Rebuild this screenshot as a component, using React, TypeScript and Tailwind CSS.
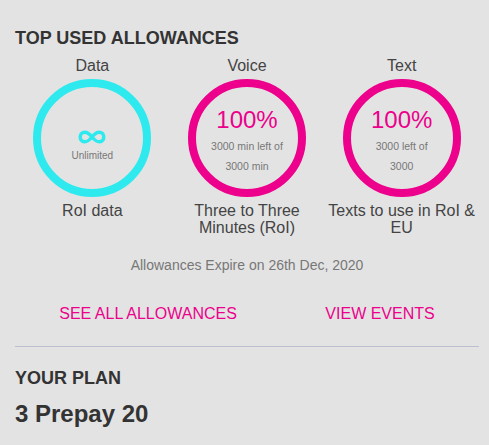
import React from "react";

type Allowance = {
  label: string;
  color: "cyan" | "pink";
  caption: string;
  main?: string;
  lines?: string[];
};

const items: Allowance[] = [
  { label: "Data", color: "cyan", caption: "RoI data" },
  { label: "Voice", color: "pink", main: "100%", lines: ["3000 min left of", "3000 min"], caption: "Three to Three Minutes (RoI)" },
  { label: "Text", color: "pink", main: "100%", lines: ["3000 left of", "3000"], caption: "Texts to use in RoI & EU" },
];

function InfinityIcon() {
  return (
    <svg width="28" height="14" viewBox="0 0 28 14" fill="none" stroke="#2eeaee" strokeWidth="3.5">
      <path d="M14 7c-2.5-3-4.5-4.8-7.2-4.8C4.3 2.2 2.2 4.3 2.2 7s2.1 4.8 4.6 4.8c2.7 0 4.7-1.8 7.2-4.8s4.5-4.8 7.2-4.8c2.5 0 4.6 2.1 4.6 4.8s-2.1 4.8-4.6 4.8c-2.7 0-4.7-1.8-7.2-4.8z" />
    </svg>
  );
}

function Dial({ item }: { item: Allowance }) {
  const ring = item.color === "cyan" ? "border-[#2eeaee]" : "border-[#ec008c]";
  return (
    <div className="flex flex-col items-center">
      <div className="text-[16px] leading-[20px] text-[#444]">{item.label}</div>
      <div className={`mt-[3px] flex h-[118px] w-[118px] flex-col items-center rounded-full border-[8px] ${ring}`}>
        {item.main ? (
          <>
            <div className="mt-[19px] text-[24px] leading-[28px] text-[#ec008c]">{item.main}</div>
            <div className="mt-[2px] text-center text-[10.5px] leading-[20px] text-[#777]">
              {item.lines?.map((l) => (
                <div key={l}>{l}</div>
              ))}
            </div>
          </>
        ) : (
          <>
            <div className="mt-[43px] h-[14px]"><InfinityIcon /></div>
            <div className="mt-[5px] text-[10px] leading-[14px] text-[#777]">Unlimited</div>
          </>
        )}
      </div>
      <div className="mt-[5px] text-center text-[16px] leading-[17px] text-[#444]">{item.caption}</div>
    </div>
  );
}

export default function App() {
  return (
    <div className="min-h-[445px] w-full bg-[#e3e3e3] pl-[15px] pr-[10px] pt-[27px] font-['Liberation_Sans',Arial,sans-serif]">
      <h2 className="text-[18px] font-bold leading-[22px] text-[#333]">TOP USED ALLOWANCES</h2>
      <div className="mt-[7px] grid grid-cols-3">
        {items.map((it) => (
          <Dial key={it.label} item={it} />
        ))}
      </div>
      <div className="mt-[21px] text-center text-[14px] leading-[16px] text-[#777]">
        Allowances Expire on 26th Dec, 2020
      </div>
      <div className="mt-[32px] flex justify-around text-[16px] leading-[18px] text-[#ec008c]">
        <a>SEE ALL ALLOWANCES</a>
        <a>VIEW EVENTS</a>
      </div>
      <div className="mt-[23px] border-t border-[#bcbfd0]" />
      <h2 className="mt-[20px] text-[18px] font-bold leading-[22px] text-[#333]">YOUR PLAN</h2>
      <div className="mt-[11px] text-[24px] font-bold leading-[28px] text-[#333]">3 Prepay 20</div>
    </div>
  );
}
